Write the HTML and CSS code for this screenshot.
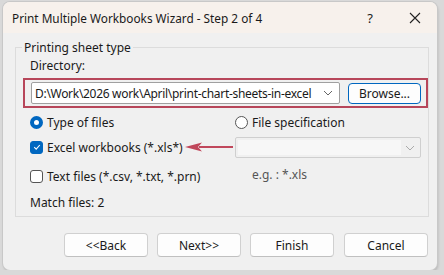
FILE: index.html
```html
<!DOCTYPE html>
<html lang="en">
<head>
  <meta charset="UTF-8">
  <title>Print Multiple Workbooks Wizard - Step 2 of 4</title>
  <link rel="stylesheet" href="styles.css">
</head>
<body>
  <div class="window">
    <div class="titlebar">
      <span class="title">Print Multiple Workbooks Wizard - Step 2 of 4</span>
      <span class="help">?</span>
      <span class="close">
        <svg width="12" height="12" viewBox="0 0 12 12"><path d="M1 1L11 11M11 1L1 11" stroke="#222" stroke-width="1.1" fill="none"/></svg>
      </span>
    </div>

    <div class="content">
      <fieldset class="group">
        <legend>Printing sheet type</legend>
        <div class="label">Directory:</div>
        <div class="highlight">
          <div class="combo">
            <span class="combo-text">D:\Work\2026 work\April\print-chart-sheets-in-excel</span>
            <svg class="chevron" width="10" height="6" viewBox="0 0 10 6"><path d="M1 1L5 5L9 1" stroke="#666" stroke-width="1" fill="none"/></svg>
          </div>
          <button class="browse">Browse...</button>
        </div>

        <div class="options">
          <div class="col">
            <div class="row radio-row">
              <span class="radio on"></span><span>Type of files</span>
            </div>
            <div class="row check-row">
              <span class="check on">
                <svg width="10" height="10" viewBox="0 0 10 10"><path d="M2.2 5.2L4.2 7.1L7.8 3" stroke="#fff" stroke-width="1.1" fill="none"/></svg>
              </span>
              <span>Excel workbooks (*.xls*)</span>
              <svg class="arrow" width="48" height="12" viewBox="0 0 48 12"><path d="M14 6H48" stroke="#c0475b" stroke-width="2.2"/><path d="M0 6L17 1.5L13 6L17 10.5Z" fill="#c0475b"/></svg>
            </div>
            <div class="row check-row last">
              <span class="check"></span><span>Text files (*.csv, *.txt, *.prn)</span>
            </div>
          </div>
          <div class="col right">
            <div class="row radio-row">
              <span class="radio"></span><span>File specification</span>
            </div>
            <div class="combo disabled">
              <span class="combo-fill"></span>
              <svg class="chevron" width="10" height="6" viewBox="0 0 10 6"><path d="M1 1L5 5L9 1" stroke="#aaa" stroke-width="1" fill="none"/></svg>
            </div>
            <div class="hint">e.g. : *.xls</div>
          </div>
        </div>

        <div class="match">Match files: 2</div>
      </fieldset>

      <div class="buttons">
        <button class="btn">&lt;&lt;Back</button>
        <button class="btn">Next&gt;&gt;</button>
        <button class="btn">Finish</button>
        <button class="btn">Cancel</button>
      </div>
    </div>
  </div>
</body>
</html>
```

FILE: styles.css
```css
body {
  margin: 0;
  background: #d9d9d9;
  font-family: "Noto Sans", "Open Sans", sans-serif;
  font-size: 12px;
  color: #1a1a1a;
}
.window {
  margin: 2px 0 0 3px;
  width: 434px;
  height: 268px;
  background: #f0f0f0;
  border-radius: 7px;
  box-shadow: 0 0 0 1px #c8c8c8, 1px 2px 3px rgba(0, 0, 0, 0.18);
  overflow: hidden;
  display: flex;
  flex-direction: column;
}
.titlebar {
  height: 31px;
  background: #f7f1ec;
  display: flex;
  align-items: center;
  padding-left: 9px;
}
.title {
  flex: 1;
  font-size: 11.8px;
}
.help {
  margin-right: 36px;
  font-size: 13px;
}
.close {
  display: flex;
  padding-right: 16px;
}
.content {
  padding: 6px 9px 0 12px;
}
.group {
  margin: 0;
  border: 1px solid #dcdcdc;
  padding: 0 0 5px 14px;
}
.group legend {
  padding: 0 2px;
  margin-left: -8px;
  font-size: 12px;
}
.label {
  margin-top: 2px;
  line-height: 16px;
}
.highlight {
  margin: 4px 0 0 -7px;
  width: 405px;
  height: 30px;
  box-sizing: border-box;
  border: 2px solid #b7465a;
  display: flex;
  align-items: center;
  padding: 0 5px 0 6px;
  gap: 8px;
}
.combo {
  height: 22px;
  box-sizing: border-box;
  background: #fff;
  border: 1px solid #a0a0a0;
  border-radius: 2px;
  display: flex;
  align-items: center;
  padding: 0 6px 0 3px;
}
.highlight .combo {
  width: 309px;
}
.combo-text {
  flex: 1;
  white-space: nowrap;
  overflow: hidden;
  letter-spacing: -0.3px;
}
.chevron {
  margin-left: 4px;
}
.browse {
  width: 73px;
  height: 21px;
  background: #fdfdfd;
  border: 1px solid #0067c0;
  border-radius: 4px;
  font: inherit;
  color: #1a1a1a;
  padding: 0;
}
.options {
  display: flex;
  margin-top: 5px;
}
.col {
  width: 205px;
}
.col.right {
  width: 186px;
}
.row {
  display: flex;
  align-items: center;
  gap: 4px;
  height: 18px;
  white-space: nowrap;
}
.check-row {
  margin-top: 7px;
}
.check-row.last {
  margin-top: 11px;
}
.radio {
  width: 13px;
  height: 13px;
  box-sizing: border-box;
  border-radius: 50%;
  border: 1px solid #555;
  background: #fff;
}
.radio.on {
  border: 4px solid #0067c0;
}
.check {
  width: 13px;
  height: 13px;
  box-sizing: border-box;
  border: 1px solid #555;
  border-radius: 3px;
  background: #fff;
  display: flex;
  align-items: center;
  justify-content: center;
}
.check.on {
  background: #0067c0;
  border-color: #0067c0;
}
.arrow {
  margin-left: -2px;
  flex-shrink: 0;
}
.combo.disabled {
  margin-top: 6px;
  height: 21px;
  background: #f0f0f0;
  border-color: #cfcfcf;
  padding: 0 5px 0 2px;
}
.combo-fill {
  flex: 1;
  height: 15px;
  background: #f7f7f7;
}
.hint {
  margin: 9px 0 0 17px;
  line-height: 16px;
  color: #555;
}
.match {
  margin-top: 10px;
  line-height: 16px;
}
.buttons {
  display: flex;
  justify-content: flex-end;
  gap: 9px;
  margin-top: 16px;
}
.btn {
  width: 84px;
  height: 24px;
  background: #fdfdfd;
  border: 1px solid #d0d0d0;
  border-bottom-color: #c0c0c0;
  border-radius: 4px;
  font: inherit;
  color: #1a1a1a;
  padding: 0;
}
.btn:last-child {
  margin-left: 1px;
}
```
